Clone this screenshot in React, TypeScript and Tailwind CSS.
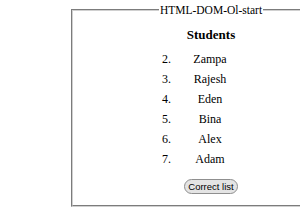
import React from "react";

const names = ["Zampa", "Rajesh", "Eden", "Bina", "Alex", "Adam"];

export default function App() {
  return (
    <div className="w-[300px] h-[210px] overflow-hidden bg-white" style={{ fontFamily: '"Liberation Serif", serif' }}>
      <fieldset className="ml-[71px] mt-[3px] w-[280px] border-2 [border-style:groove] border-[#d0d0d0] pb-[11px] text-black">
        <legend className="mx-auto px-[1px] text-[11.5px] leading-[14px]">HTML-DOM-Ol-start</legend>
        <h3 className="mt-[10px] mb-[6px] text-center text-[13px] font-bold leading-[16px]">Students</h3>
        <ol className="text-[12px] leading-[20px]">
          {names.map((n, i) => (
            <li key={n} className="flex pl-[68px]">
              <span className="w-[30px] text-right">{i + 2}.</span>
              <span className="ml-[4px] w-[70px] text-center">{n}</span>
            </li>
          ))}
        </ol>
        <div className="mt-[10px] flex justify-center">
          <button
            className="h-[15px] rounded-full border border-[#8f8f8f] bg-[#e4e4e4] px-[3px] text-[9.5px] leading-[13px] text-black"
            style={{ fontFamily: '"Liberation Sans", Arial, sans-serif' }}
          >
            Correct list
          </button>
        </div>
      </fieldset>
    </div>
  );
}
